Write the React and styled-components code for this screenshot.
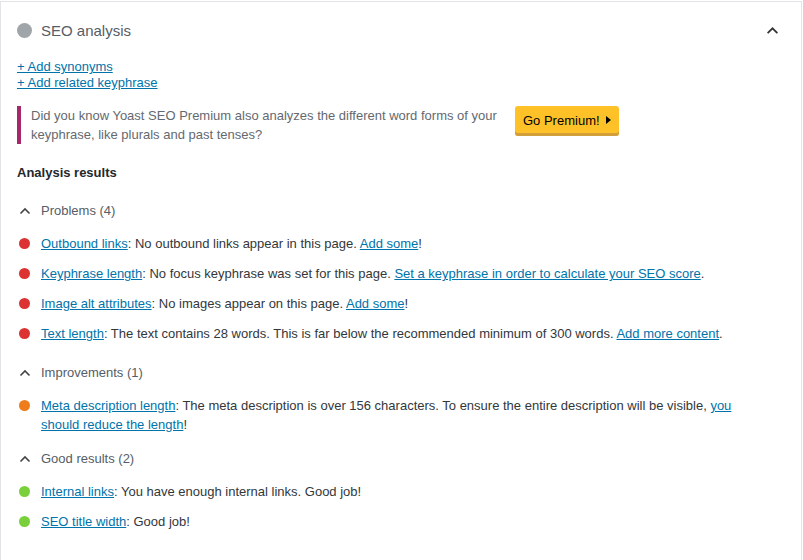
import React from "react";
import styled, { createGlobalStyle } from "styled-components";

const GlobalStyle = createGlobalStyle`
  body {
    margin: 0;
    background: #fff;
    font-family: "Liberation Sans", Arial, sans-serif;
  }
`;

const problems = [
  {
    title: "Outbound links",
    text: ": No outbound links appear in this page. ",
    action: "Add some",
    end: "!",
  },
  {
    title: "Keyphrase length",
    text: ": No focus keyphrase was set for this page. ",
    action: "Set a keyphrase in order to calculate your SEO score",
    end: ".",
  },
  {
    title: "Image alt attributes",
    text: ": No images appear on this page. ",
    action: "Add some",
    end: "!",
  },
  {
    title: "Text length",
    text: ": The text contains 28 words. This is far below the recommended minimum of 300 words. ",
    action: "Add more content",
    end: ".",
  },
];

const improvements = [
  {
    title: "Meta description length",
    text: ": The meta description is over 156 characters. To ensure the entire description will be visible, ",
    action: "you should reduce the length",
    end: "!",
  },
];

const goodResults = [
  { title: "Internal links", text: ": You have enough internal links. Good job!" },
  { title: "SEO title width", text: ": Good job!" },
];

const ChevronUp = ({ size = 12, color = "#555" }) => (
  <svg width={size} height={size} viewBox="0 0 12 12" fill="none">
    <path d="M1.5 8.5L6 4l4.5 4.5" stroke={color} strokeWidth="1.6" />
  </svg>
);

const ResultSection = ({ label, color, items, gap = 21 }) => (
  <Section $gap={gap}>
    <SectionHeader>
      <ChevronWrap>
        <ChevronUp size={12} color="#444" />
      </ChevronWrap>
      {label}
    </SectionHeader>
    <ResultList>
      {items.map((item) => (
        <ResultItem key={item.title}>
          <Bullet $color={color} />
          <ResultText>
            <Link href="#">{item.title}</Link>
            {item.text}
            {item.action && <Link href="#">{item.action}</Link>}
            {item.end}
          </ResultText>
        </ResultItem>
      ))}
    </ResultList>
  </Section>
);

const App = () => {
  return (
    <>
      <GlobalStyle />
      <Panel>
        {/* 헤더 */}
        <Header>
          <ScoreDot />
          <Title>SEO analysis</Title>
          <Toggle>
            <ChevronUp size={13} color="#333" />
          </Toggle>
        </Header>
        <Body>
          <LinkStack>
            <Link href="#">+ Add synonyms</Link>
            <Link href="#">+ Add related keyphrase</Link>
          </LinkStack>
          {/* 프리미엄 안내 */}
          <Notice>
            <NoticeText>
              Did you know Yoast SEO Premium also analyzes the different word forms of your keyphrase, like
              plurals and past tenses?
            </NoticeText>
            <PremiumButton>
              Go Premium!
              <Caret />
            </PremiumButton>
          </Notice>
          <Heading>Analysis results</Heading>
          <ResultSection label="Problems (4)" color="#dc3232" items={problems} gap={20} />
          <ResultSection label="Improvements (1)" color="#ee7c1b" items={improvements} />
          <ResultSection label="Good results (2)" color="#7ad03a" items={goodResults} gap={16} />
        </Body>
      </Panel>
    </>
  );
};

const Panel = styled.div`
  margin-top: 1px;
  width: 802px;
  height: 559px;
  border: 1px solid #e2e4e7;
  border-bottom: none;
  background: #fff;
  box-sizing: border-box;
`;

const Header = styled.div`
  height: 56px;
  display: flex;
  align-items: center;
  padding: 0 16px;
  box-sizing: border-box;
`;

const ScoreDot = styled.span`
  width: 15px;
  height: 15px;
  border-radius: 50%;
  background: #a0a5aa;
  margin-right: 9px;
  flex-shrink: 0;
`;

const Title = styled.h2`
  margin: 0;
  flex: 1;
  font-size: 15px;
  font-weight: 400;
  color: #555d66;
  padding-top: 1px;
`;

const Toggle = styled.span`
  width: 26px;
  display: flex;
  justify-content: center;
  align-items: center;
  padding-top: 1px;
`;

const Body = styled.div`
  padding: 0 16px;
`;

const LinkStack = styled.div`
  display: flex;
  flex-direction: column;
  align-items: flex-start;
  padding-top: 1px;
  font-size: 13px;
  line-height: 16px;
`;

const Link = styled.a`
  color: #0073aa;
  text-decoration: underline;
`;

const Notice = styled.div`
  margin-top: 15px;
  display: flex;
  align-items: flex-start;
  border-left: 4px solid #a4286a;
  padding: 0 0 0 10px;
  min-height: 38px;
`;

const NoticeText = styled.p`
  margin: 0;
  width: 470px;
  font-size: 13px;
  line-height: 19px;
  color: #646970;
`;

const PremiumButton = styled.button`
  margin-left: 14px;
  height: 30px;
  padding: 0 8px 2px;
  display: flex;
  align-items: center;
  gap: 6px;
  border: none;
  border-radius: 3px;
  background: #fec228;
  box-shadow: inset 0 -3px 0 #d2a03a;
  font-family: inherit;
  font-size: 13px;
  color: #000;
`;

const Caret = styled.span`
  width: 0;
  height: 0;
  border-left: 5px solid #000;
  border-top: 4px solid transparent;
  border-bottom: 4px solid transparent;
`;

const Heading = styled.h3`
  margin: 20px 0 0;
  font-size: 13px;
  font-weight: 700;
  color: #23282d;
  line-height: 18px;
`;

const Section = styled.div`
  margin-top: ${(p) => p.$gap}px;
`;

const SectionHeader = styled.div`
  display: flex;
  align-items: center;
  font-size: 13px;
  line-height: 18px;
  color: #555d66;
`;

const ChevronWrap = styled.span`
  width: 22px;
  display: flex;
  align-items: center;
  padding-left: 2px;
`;

const ResultList = styled.ul`
  list-style: none;
  margin: 14px 0 0;
  padding: 0;
  display: flex;
  flex-direction: column;
  gap: 11px;
`;

const ResultItem = styled.li`
  display: flex;
  align-items: flex-start;
`;

const Bullet = styled.span`
  width: 11px;
  height: 11px;
  border-radius: 50%;
  background: ${(p) => p.$color};
  margin: 4px 11px 0 2px;
  flex-shrink: 0;
`;

const ResultText = styled.p`
  margin: 0;
  font-size: 13px;
  line-height: 19px;
  color: #32373c;
  max-width: 700px;
`;

export default App;
